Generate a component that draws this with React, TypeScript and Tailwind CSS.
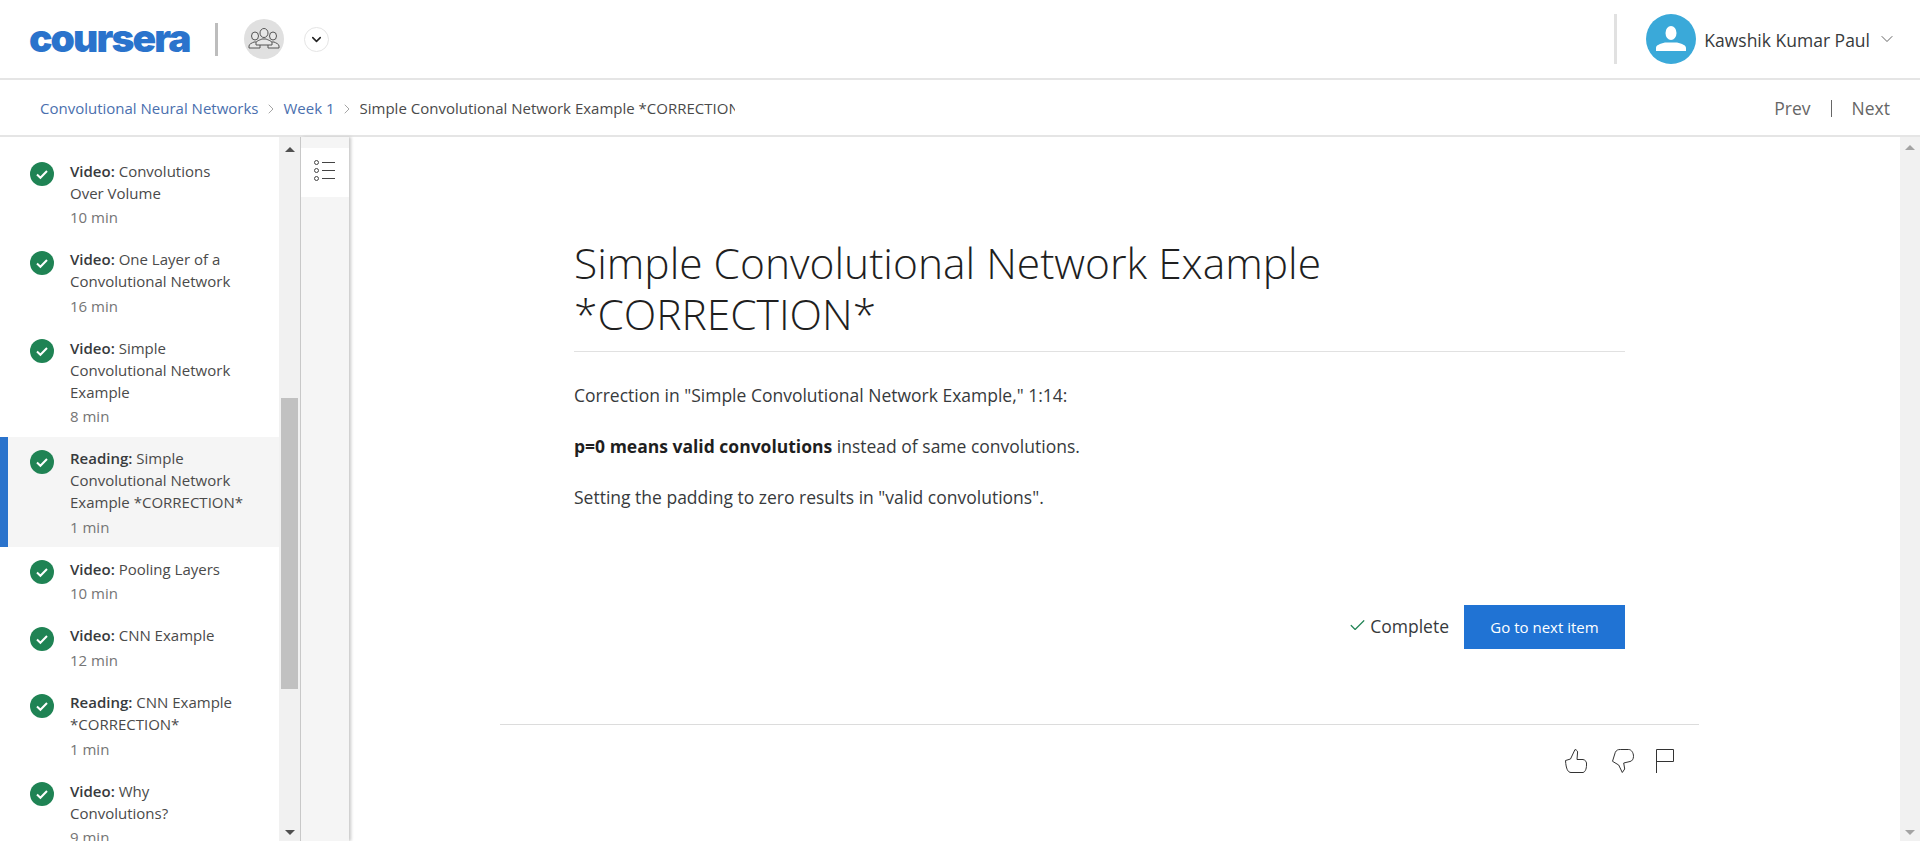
import React from "react";
import { ChevronDown, ChevronRight, Check } from "lucide-react";

const items = [
  { k: "Video:", t: "Convolutions Over Volume", m: "10 min" },
  { k: "Video:", t: "One Layer of a Convolutional Network", m: "16 min" },
  { k: "Video:", t: "Simple Convolutional Network Example", m: "8 min" },
  { k: "Reading:", t: "Simple Convolutional Network Example *CORRECTION*", m: "1 min", active: true },
  { k: "Video:", t: "Pooling Layers", m: "10 min" },
  { k: "Video:", t: "CNN Example", m: "12 min" },
  { k: "Reading:", t: "CNN Example *CORRECTION*", m: "1 min" },
  { k: "Video:", t: "Why Convolutions?", m: "9 min" },
];

function Tick() {
  return (
    <svg width="24" height="24" viewBox="0 0 24 24" className="shrink-0">
      <circle cx="12" cy="12" r="12" fill="#1f8354" />
      <path d="M7 12.500l3.400 3.300L17 9" fill="none" stroke="#fff" strokeWidth="2" />
    </svg>
  );
}

function Item({ k, t, m, active }: { k: string; t: string; m: string; active?: boolean }) {
  return (
    <div className={`flex pt-[10.500px] pb-[9.600px] pr-[10px] ${active ? "border-l-[8px] border-[#2a73cc] bg-[#f5f5f5] pl-[22px]" : "pl-[30px]"}`}>
      <div className="mt-[2.500px]">
        <Tick />
      </div>
      <div className="ml-[16px] w-[175px]">
        <div className="text-[15px] leading-[22px] text-[#4a4a4a]">
          <span className="font-semibold text-[#373a3c]">{k}</span> {t}
        </div>
        <div className="mt-[2.500px] text-[15px] leading-[22px] text-[#757575]">{m}</div>
      </div>
    </div>
  );
}

function Arrow({ up, cls }: { up?: boolean; cls?: string }) {
  return (
    <svg width="10" height="5" viewBox="0 0 10 5" className={cls}>
      <path d={up ? "M5 0l5 5H0z" : "M0 0h10L5 5z"} fill="currentColor" />
    </svg>
  );
}

export default function App() {
  return (
    <div className="flex h-[841px] w-[1920px] flex-col overflow-hidden bg-white font-['Open_Sans',sans-serif] text-[#373a3c]">
      <header className="flex h-[80px] shrink-0 items-center border-b-2 border-[#e5e5e5] pl-[29px] pr-[23px]">
        <div className="mb-[4px] flex w-[160px] items-center font-['Inter',sans-serif] text-[39px] leading-none font-black tracking-[-1.9px] text-[#2a73cc]">
          coursera
        </div>
        <div className="ml-[26px] h-[33px] w-[3px] bg-[#bdbdbd]" />
        <div className="ml-[26px] flex h-[40px] w-[40px] items-center justify-center rounded-full bg-[#e0e0e0]">
          <svg width="32" height="22" viewBox="0 0 32 22" fill="#e8e8e8" stroke="#555" strokeWidth="1">
            <ellipse cx="7" cy="8" rx="3.500" ry="4" />
            <ellipse cx="25" cy="8" rx="3.500" ry="4" />
            <path d="M1 20v-2c0-2 3-3 5-4h3l3 2v4zM31 20v-2c0-2-3-3-5-4h-3l-3 2v4z" />
            <ellipse cx="16" cy="5" rx="4" ry="4.500" />
            <path d="M8 17v-2c0-2 4-3 6-4h4c2 1 6 2 6 4v2z" />
          </svg>
        </div>
        <div className="ml-[20px] flex h-[25px] w-[25px] items-center justify-center rounded-full border border-[#e5e5e5]">
          <ChevronDown size={15} strokeWidth={2.5} className="text-[#222]" />
        </div>
        <div className="ml-auto h-[50px] w-[3px] bg-[#e1e1e1]" />
        <div className="ml-[29px] flex h-[50px] w-[50px] items-center justify-center rounded-full bg-[#3aa9d9]">
          <svg width="32" height="32" viewBox="0 0 32 32">
            <ellipse cx="16" cy="10" rx="5.500" ry="7" fill="#fff" />
            <path d="M1 28v-3c0-3 4-4 9-5.500h12c5 1.500 9 2.500 9 5.500v3z" fill="#fff" />
          </svg>
        </div>
        <span className="mt-[2px] ml-[8px] text-[17.500px] whitespace-nowrap text-[#373a3c]">Kawshik Kumar Paul</span>
        <ChevronDown size={20} strokeWidth={1} className="ml-[7px] text-[#444]" />
      </header>

      <div className="flex h-[57px] shrink-0 items-center border-b-2 border-[#e5e5e5] pt-[2px] pl-[40px] pr-[30px] text-[15px]">
        <span className="text-[#4a6fae]">Convolutional Neural Networks</span>
        <ChevronRight size={16} strokeWidth={1} className="mx-[4.500px] text-[#777]" />
        <span className="text-[#4a6fae]">Week 1</span>
        <ChevronRight size={16} strokeWidth={1} className="mx-[4.500px] text-[#777]" />
        <span className="w-[375px] overflow-hidden whitespace-nowrap text-[#4a4a4a]">Simple Convolutional Network Example *CORRECTION*</span>
        <div className="ml-auto flex items-center text-[17.500px] text-[#666]">
          <span>Prev</span>
          <div className="mx-[20px] h-[17px] w-px bg-[#666]" />
          <span>Next</span>
        </div>
      </div>

      <div className="flex min-h-0 flex-1">
        <div className="w-[279px] shrink-0 overflow-hidden pt-[12px]">
          {items.map((it) => (
            <Item key={it.t} {...it} />
          ))}
        </div>
        <div className="relative w-[22px] shrink-0 border-r border-[#c8c8c8] bg-[#f1f1f1] text-[#505050]">
          <Arrow up cls="absolute left-[6px] top-[10px]" />
          <Arrow cls="absolute left-[6px] bottom-[6px]" />
          <div className="absolute left-[2px] top-[261px] h-[291px] w-[17px] bg-[#c1c1c1]" />
        </div>
        <div className="w-[48px] shrink-0 bg-[#f5f5f5] pt-[11px] shadow-[2px_0_3px_#c8c8c8]">
          <div className="flex h-[49px] items-start justify-center bg-white pt-[12px]">
            <svg width="22" height="21" viewBox="0 0 22 21" fill="none" stroke="#444">
              <circle cx="2.500" cy="2.500" r="2" />
              <circle cx="2.500" cy="10.500" r="2" />
              <circle cx="2.500" cy="18.500" r="2" />
              <path d="M8 2.500h13M8 10.500h13M8 18.500h13" />
            </svg>
          </div>
        </div>
        <main className="flex min-w-0 flex-1 flex-col">
          <div className="ml-[151px] w-[1199px]">
            <div className="mx-[74px] pt-[100px]">
              <h1 className="border-b border-[#e1e1e1] pb-[12px] text-[42.500px] leading-[51px] font-light text-[#1f1f1f]">
                Simple Convolutional Network Example
                <br />
                *CORRECTION*
              </h1>
              <p className="mt-[30px] text-[17.500px] leading-[26px]">Correction in "Simple Convolutional Network Example," 1:14:</p>
              <p className="mt-[25px] text-[17.500px] leading-[26px]">
                <strong className="font-bold text-[#1f1f1f]">p=0 means valid convolutions</strong> instead of same convolutions.
              </p>
              <p className="mt-[25px] text-[17.500px] leading-[26px]">Setting the padding to zero results in "valid convolutions".</p>
              <div className="mt-[95px] flex items-center justify-end">
                <Check size={19} strokeWidth={1.5} className="mb-[4px] text-[#1f8354]" />
                <span className="mb-[2px] ml-[3px] text-[17.500px] text-[#373a3c]">Complete</span>
                <div className="ml-[15px] flex h-[44px] w-[161px] items-center justify-center bg-[#2073d4] text-[15px] font-medium text-white">Go to next item</div>
              </div>
            </div>
            <div className="mt-[75px] border-t border-[#dcdcdc]" />
            <div className="mt-[24px] flex justify-end pr-[25px]">
              <svg width="22" height="24" viewBox="0 0 22 24" fill="none" stroke="#333" className="overflow-visible">
                <path d="M0.500 11.500L5.500 10L10 0.500C12 1 13 2.500 12.500 4L12 10.500H18C20.500 11 22 13 21.500 16C21.500 20 20 24 17 23.500H6C3 23.500 1 20 0.500 11.500Z" />
              </svg>
              <svg width="22" height="24" viewBox="0 0 22 24" fill="none" stroke="#333" className="ml-[25px] overflow-visible">
                <path d="M0.500 12.300L3.300 3.300C4.500 1 6 0.500 8.300 0.500H16.700C19.500 0.500 21.500 4 21.500 7.300C21.500 10 20 12.300 18 12.500L11.700 14L12.700 20L10.300 23.500L6.700 16Z" />
              </svg>
              <svg width="18" height="24" viewBox="0 0 18 24" fill="none" stroke="#333" className="ml-[22px]">
                <path d="M0.500 24V0.500H17.500V12.500H0.500" />
              </svg>
            </div>
          </div>
        </main>
        <div className="relative w-[20px] shrink-0 bg-[#f1f1f1] text-[#a3a3a3]">
          <Arrow up cls="absolute left-[5px] top-[8px]" />
          <Arrow cls="absolute left-[5px] bottom-[6px]" />
        </div>
      </div>
    </div>
  );
}
